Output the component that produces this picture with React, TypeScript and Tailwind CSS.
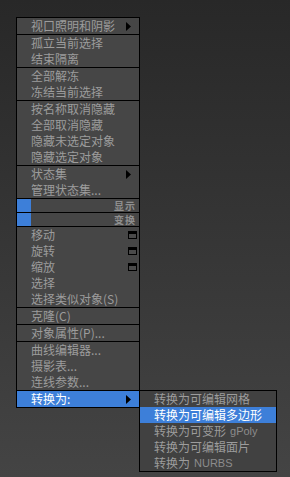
import React from 'react';

type Item = {
    label: string;
    latin?: string;
    arrow?: boolean;
    box?: boolean;
    active?: boolean;
};

const font = { fontFamily: '"Noto Sans CJK SC", "Noto Sans", sans-serif' };

const groups: Item[][] = [
    [{ label: '视口照明和阴影', arrow: true }],
    [{ label: '孤立当前选择' }, { label: '结束隔离' }],
    [{ label: '全部解冻' }, { label: '冻结当前选择' }],
    [
        { label: '按名称取消隐藏' },
        { label: '全部取消隐藏' },
        { label: '隐藏未选定对象' },
        { label: '隐藏选定对象' },
    ],
    [{ label: '状态集', arrow: true }, { label: '管理状态集...' }],
];

const lower: Item[][] = [
    [
        { label: '移动', box: true },
        { label: '旋转', box: true },
        { label: '缩放', box: true },
        { label: '选择' },
        { label: '选择类似对象(S)' },
    ],
    [{ label: '克隆(C)' }],
    [{ label: '对象属性(P)...' }],
    [{ label: '曲线编辑器...' }, { label: '摄影表...' }, { label: '连线参数...' }],
    [{ label: '转换为:', arrow: true, active: true }],
];

const sub: Item[] = [
    { label: '转换为可编辑网格' },
    { label: '转换为可编辑多边形', active: true },
    { label: '转换为可变形', latin: 'gPoly' },
    { label: '转换为可编辑面片' },
    { label: '转换为', latin: 'NURBS' },
];

function Arrow() {
    return (
        <svg width="5" height="9" viewBox="0 0 5 9" className="absolute right-[8px] top-[4px]">
            <path d="M0 0 L5 4.5 L0 9 Z" fill="#000" />
        </svg>
    );
}

function Box() {
    return (
        <span className="absolute right-[2px] top-[4px] h-[8px] w-[9px] border border-t-[3px] border-black bg-[#4a4a4a]" />
    );
}

function Row({ item }: { item: Item }) {
    return (
        <div
            className={
                'relative flex h-[16px] items-center pl-[14px] text-[12px] leading-[16px] whitespace-nowrap ' +
                (item.active ? 'bg-[#3d7fd9] text-white' : 'text-[#9c9c9c]')
            }
            style={font}
        >
            <span>{item.label}</span>
            {item.latin && (
                <span
                    className={'ml-[4px] text-[11px] ' + (item.active ? 'text-white' : 'text-[#8c8c8c]')}
                    style={{ fontFamily: '"Liberation Sans", sans-serif' }}
                >
                    {item.latin}
                </span>
            )}
            {item.arrow && <Arrow />}
            {item.box && <Box />}
        </div>
    );
}

function Bar({ label }: { label: string }) {
    return (
        <div className="flex h-[13px] items-center">
            <div className="h-full w-[14px] bg-[#3d7fd9]" />
            <span
                className="ml-auto pr-[3px] text-[10px] leading-[13px] font-bold tracking-[1px] text-[#8f8f8f]"
                style={font}
            >
                {label}
            </span>
        </div>
    );
}

function Group({ items, first }: { items: Item[]; first?: boolean }) {
    return (
        <div className={first ? '' : 'border-t border-black'}>
            {items.map((it) => (
                <Row key={it.label} item={it} />
            ))}
        </div>
    );
}

export default function App() {
    return (
        <div className="relative h-[477px] w-[290px] overflow-hidden bg-gradient-to-b from-[#282828] to-[#444444]">
            <div className="ml-[16px] pt-[17px]">
                <div className="w-[124px] border border-black bg-[#464646]">
                    {groups.map((g, i) => (
                        <Group key={i} items={g} first={i === 0} />
                    ))}
                    <div className="border-t border-black">
                        <Bar label="显示" />
                    </div>
                    <div className="border-t border-black">
                        <Bar label="变换" />
                    </div>
                    {lower.map((g, i) => (
                        <Group key={i} items={g} />
                    ))}
                </div>
            </div>

            {/* Convert-to submenu */}
            <div className="absolute left-[139px] top-[390px] w-[138px] border border-black bg-[#414141]">
                {sub.map((it) => (
                    <Row key={it.label} item={it} />
                ))}
            </div>
        </div>
    );
}
